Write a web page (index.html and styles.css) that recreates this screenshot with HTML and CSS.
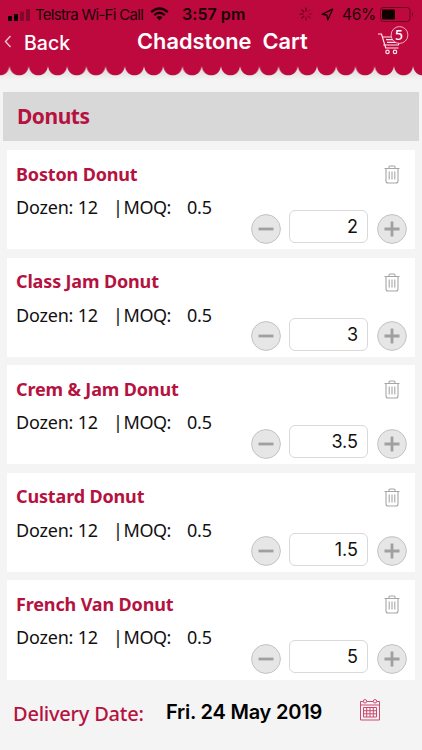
FILE: index.html
```
<!DOCTYPE html>
<html lang="en">
<head>
    <meta charset="UTF-8">
    <meta name="viewport" content="width=device-width, initial-scale=1.0">
    <title>Chadstone Cart</title>
    <link rel="stylesheet" href="styles.css">
</head>
<body>
    <!-- Shared icons -->
    <svg class="icon-defs" width="0" height="0">
        <symbol id="icon-trash" viewBox="0 0 16 19">
            <path d="M.5 3.500h15M5 3V2q0-1 1-1h4q1 0 1 1v1M2 4v12q0 2 2 2h8q2 0 2-2V4M5.200 6.500v8M8 6.500v8M10.800 6.500v8" fill="none" stroke="#a6a6a6" stroke-width="1.100"/>
        </symbol>
        <symbol id="icon-minus" viewBox="0 0 30 30">
            <circle cx="15" cy="15" r="14.400" fill="#e6e6e6" stroke="#bdbdbd" stroke-width=".9"/>
            <path d="M7.500 15h15" stroke="#a0a0a0" stroke-width="2.800"/>
        </symbol>
        <symbol id="icon-plus" viewBox="0 0 30 30">
            <circle cx="15" cy="15" r="14.400" fill="#e6e6e6" stroke="#bdbdbd" stroke-width=".9"/>
            <path d="M7.500 15h15M15 7.500v15" stroke="#a0a0a0" stroke-width="2.800"/>
        </symbol>
    </svg>

    <!-- Header Section -->
    <header>
        <div class="status-bar">
            <svg class="signal" width="23" height="12" viewBox="0 0 23 12">
                <rect x="0" y="7" width="4" height="5" rx=".8"/>
                <rect x="6" y="5" width="4" height="7" rx=".8"/>
                <rect x="12" y="2.500" width="4" height="9.500" rx=".8" opacity=".3"/>
                <rect x="18" y="0" width="4" height="12" rx=".8" opacity=".3"/>
            </svg>
            <span class="carrier">Telstra Wi-Fi Call</span>
            <svg class="wifi" width="19" height="14" viewBox="0 0 19 14">
                <path d="M1.200 5.200Q9.500-2.200 17.800 5.200M4.200 8.200Q9.500 3.400 14.800 8.200" fill="none" stroke="#1a0008" stroke-width="2.300"/>
                <path d="M6.500 10.300Q9.500 7.600 12.500 10.300L9.500 13.400z" fill="#1a0008"/>
            </svg>
            <span class="clock">3:57 pm</span>
            <svg class="spinner" width="14" height="14" viewBox="0 0 14 14">
                <g stroke="#40000f" stroke-width="1.100" stroke-linecap="round">
                    <path d="M7 1v3"/>
                    <path d="M11.200 2.800L9.200 4.800" opacity=".3"/>
                    <path d="M13 7h-3" opacity=".4"/>
                    <path d="M11.200 11.200L9.200 9.200" opacity=".5"/>
                    <path d="M7 13v-3" opacity=".6"/>
                    <path d="M2.800 11.200l2-2" opacity=".7"/>
                    <path d="M1 7h3" opacity=".8"/>
                    <path d="M2.800 2.800l2 2" opacity=".9"/>
                </g>
            </svg>
            <svg class="location" width="13" height="13" viewBox="0 0 13 13">
                <path d="M11.600 1.200L1 6.300l4.800.700.900 4.900z" fill="none" stroke="#1a0008" stroke-width="1.300" stroke-linejoin="round"/>
            </svg>
            <span class="percent">46%</span>
            <svg class="battery" width="34" height="15" viewBox="0 0 34 15">
                <rect x=".5" y=".5" width="29.500" height="14" rx="3" fill="none" stroke="#6d0525"/>
                <rect x="2" y="2.500" width="13" height="10" rx="1" fill="#100"/>
                <path d="M32 5q2 2.500 0 5z" fill="#6d0525"/>
            </svg>
        </div>
        <div class="nav-bar">
            <a class="back" href="#">
                <svg width="8" height="13" viewBox="0 0 8 13"><path d="M6.500 1L1.500 6.500l5 5.500" fill="none" stroke="#f6c4d2" stroke-width="1.400"/></svg>
                <span>Back</span>
            </a>
            <h1>Chadstone&nbsp; Cart</h1>
            <div class="cart">
                <svg width="32" height="30" viewBox="0 0 32 30">
                    <g fill="none" stroke="#ffe3eb" stroke-width="1.200">
                        <path d="M0 8h3.500l4.200 14h12.800M4.500 11h10M5.300 19h15l2.300-5M8 13.700h9M9 16.300h10"/>
                        <circle cx="9.500" cy="25.900" r="1.700"/>
                        <circle cx="17" cy="25.900" r="1.700"/>
                    </g>
                    <circle cx="21.500" cy="9" r="8.400" fill="#be093e" stroke="#ffd3df" stroke-width=".8"/>
                </svg>
                <span class="badge">5</span>
            </div>
        </div>
        <svg class="scallops" width="422" height="16">
            <defs>
                <linearGradient id="shade" x1="0" y1="0" x2="0" y2="1">
                    <stop offset="0" stop-color="#d6d4d5"/>
                    <stop offset="1" stop-color="#f4f4f4"/>
                </linearGradient>
                <pattern id="scallop" x="9.500" y="0" width="19.220" height="16" patternUnits="userSpaceOnUse">
                    <path d="M0 0h19.220v2C18.500 8 14.500 11.300 9.610 11.300S.7 8 0 2z" fill="#be093e"/>
                </pattern>
            </defs>
            <rect width="422" height="16" fill="url(#shade)"/>
            <rect width="422" height="16" fill="url(#scallop)"/>
        </svg>
    </header>

    <main>
        <h2 class="category">Donuts</h2>

        <div class="item">
            <div class="info">
                <h3>Boston Donut</h3>
                <p><span class="dozen">Dozen: 12</span><span class="moq">| MOQ:</span><span>0.5</span></p>
            </div>
            <div class="actions">
                <svg class="trash"><use href="#icon-trash"/></svg>
                <div class="stepper">
                    <svg class="round"><use href="#icon-minus"/></svg>
                    <span class="qty">2</span>
                    <svg class="round"><use href="#icon-plus"/></svg>
                </div>
            </div>
        </div>

        <div class="item">
            <div class="info">
                <h3>Class Jam Donut</h3>
                <p><span class="dozen">Dozen: 12</span><span class="moq">| MOQ:</span><span>0.5</span></p>
            </div>
            <div class="actions">
                <svg class="trash"><use href="#icon-trash"/></svg>
                <div class="stepper">
                    <svg class="round"><use href="#icon-minus"/></svg>
                    <span class="qty">3</span>
                    <svg class="round"><use href="#icon-plus"/></svg>
                </div>
            </div>
        </div>

        <div class="item">
            <div class="info">
                <h3>Crem &amp; Jam Donut</h3>
                <p><span class="dozen">Dozen: 12</span><span class="moq">| MOQ:</span><span>0.5</span></p>
            </div>
            <div class="actions">
                <svg class="trash"><use href="#icon-trash"/></svg>
                <div class="stepper">
                    <svg class="round"><use href="#icon-minus"/></svg>
                    <span class="qty">3.5</span>
                    <svg class="round"><use href="#icon-plus"/></svg>
                </div>
            </div>
        </div>

        <div class="item">
            <div class="info">
                <h3>Custard Donut</h3>
                <p><span class="dozen">Dozen: 12</span><span class="moq">| MOQ:</span><span>0.5</span></p>
            </div>
            <div class="actions">
                <svg class="trash"><use href="#icon-trash"/></svg>
                <div class="stepper">
                    <svg class="round"><use href="#icon-minus"/></svg>
                    <span class="qty">1.5</span>
                    <svg class="round"><use href="#icon-plus"/></svg>
                </div>
            </div>
        </div>

        <div class="item">
            <div class="info">
                <h3>French Van Donut</h3>
                <p><span class="dozen">Dozen: 12</span><span class="moq">| MOQ:</span><span>0.5</span></p>
            </div>
            <div class="actions">
                <svg class="trash"><use href="#icon-trash"/></svg>
                <div class="stepper">
                    <svg class="round"><use href="#icon-minus"/></svg>
                    <span class="qty">5</span>
                    <svg class="round"><use href="#icon-plus"/></svg>
                </div>
            </div>
        </div>
    </main>

    <!-- Delivery Section -->
    <footer>
        <span class="label">Delivery Date:</span>
        <span class="date">Fri. 24 May 2019</span>
        <svg class="calendar" width="20" height="22" viewBox="0 0 20 22">
            <g fill="none" stroke="#cf4870" stroke-width="1">
                <path d="M3 2.500H.5v18.500h19V2.500H17M7 2.500h6M.5 6h19"/>
                <circle cx="5" cy="2.300" r="1.700"/>
                <circle cx="15" cy="2.300" r="1.700"/>
                <path d="M3.500 8.500h13v9.500h-13zM6.700 8.500v9.500M10 8.500v9.500M13.300 8.500v9.500M3.500 11.700h13M3.500 14.800h13"/>
            </g>
        </svg>
    </footer>
</body>
</html>
```

FILE: styles.css
```
/* General Styles */
* {
    box-sizing: border-box;
}

body {
    font-family: 'Noto Sans', sans-serif;
    margin: 0;
    background-color: #f4f4f4;
    color: #111;
    height: 750px;
    overflow: hidden;
}

h1, h2, h3, p {
    margin: 0;
}

svg {
    display: block;
    flex-shrink: 0;
}

.icon-defs {
    position: absolute;
}

/* Header */
header {
    background-color: #be093e;
    height: 80px;
    font-family: 'Inter', sans-serif;
}

.status-bar {
    display: flex;
    align-items: center;
    height: 28px;
    padding-left: 8px;
    font-size: 15px;
    color: #1a0008;
    white-space: nowrap;
}

.signal {
    margin-top: 1px;
}

.carrier {
    width: 109px;
    margin-left: 4px;
    letter-spacing: -0.7px;
}

.wifi {
    margin-left: 6px;
}

.clock {
    width: 66px;
    margin-left: 13px;
    font-size: 16px;
    font-weight: 600;
    letter-spacing: 0.05px;
}

.spinner {
    margin-left: 51px;
}

.location {
    margin-left: 8px;
}

.percent {
    width: 34px;
    margin-left: 8px;
    font-size: 15.5px;
    letter-spacing: -0.3px;
}

.battery {
    margin-left: 4px;
}

.nav-bar {
    display: flex;
    height: 36px;
    color: #fff;
}

.back {
    display: flex;
    align-items: center;
    gap: 12px;
    width: 137px;
    height: 30px;
    padding-left: 4px;
    color: #fff;
    font-size: 19.5px;
    font-weight: 500;
    text-decoration: none;
}

.back svg {
    margin-top: -3px;
}

h1 {
    width: 241px;
    font-size: 21.8px;
    line-height: 27px;
    font-weight: 600;
    white-space: nowrap;
}

.cart {
    position: relative;
    margin-top: -2px;
}

.badge {
    position: absolute;
    top: 0;
    left: 12px;
    width: 18px;
    text-align: center;
    font: 500 14px/18px 'Noto Sans', sans-serif;
}

/* Cart items */
main {
    padding: 12px 7px 0;
}

.category {
    margin: 0 -4px 9px;
    padding-left: 14px;
    height: 49px;
    line-height: 48px;
    background-color: #d8d8d8;
    color: #b5123f;
    font-size: 21px;
    letter-spacing: -0.5px;
}

.item {
    display: flex;
    justify-content: space-between;
    height: 99.300px;
    margin-bottom: 8.300px;
    padding: 0 8px 0 9px;
    background-color: #fff;
}

.info {
    padding-top: 10.500px;
}

h3 {
    color: #b5123f;
    font-size: 18px;
    line-height: 26px;
    letter-spacing: -0.15px;
}

.info p {
    display: flex;
    margin-top: 7.500px;
    font-size: 18px;
    line-height: 26px;
    letter-spacing: -0.2px;
    white-space: nowrap;
}

.dozen {
    width: 97px;
}

.moq {
    width: 74px;
    word-spacing: -3px;
    letter-spacing: -0.5px;
}

.trash {
    width: 16px;
    height: 19px;
    margin: 15px 7px 26px auto;
}

.stepper {
    display: flex;
}

.round {
    width: 30px;
    height: 30px;
    margin-top: 3.500px;
}

.qty {
    width: 79px;
    height: 33px;
    margin: 0 9px 0 8px;
    padding-right: 9px;
    border: 1px solid #d9d9d9;
    border-radius: 6px;
    font-family: 'Inter', sans-serif;
    font-size: 18px;
    line-height: 31px;
    text-align: right;
}

/* Delivery */
footer {
    display: flex;
    padding: 11px 0 0 13px;
    white-space: nowrap;
}

.label {
    width: 153px;
    color: #b5123f;
    font-size: 20px;
    font-weight: 500;
    line-height: 30px;
    letter-spacing: -0.22px;
}

.date {
    width: 194px;
    color: #000;
    font-family: 'Inter', sans-serif;
    font-size: 20px;
    font-weight: 600;
    line-height: 26px;
    letter-spacing: -0.22px;
}
```
